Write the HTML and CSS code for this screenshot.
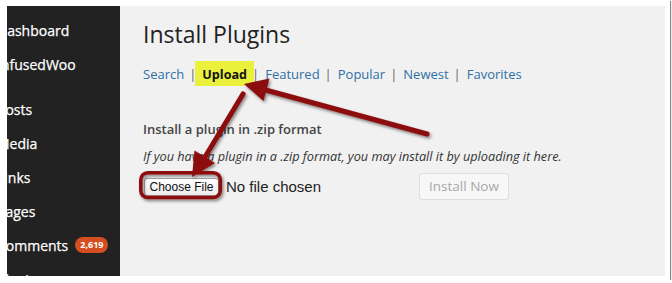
FILE: index.html
```html
<!DOCTYPE html>
<html>
<head>
<meta charset="utf-8">
<link rel="stylesheet" href="styles.css">
</head>
<body>
<div class="card">
  <div class="shot">
    <nav class="sidebar">
      <div class="item">Dashboard</div>
      <div class="item">InfusedWoo</div>
      <div class="item sep">Posts</div>
      <div class="item">Media</div>
      <div class="item">Links</div>
      <div class="item">Pages</div>
      <div class="item">Comments <span class="badge">2,619</span></div>
      <div class="item">Plugins</div>
    </nav>
    <main class="main">
      <h2 class="title">Install Plugins</h2>
      <div class="tabs">
        <a class="link">Search</a><span class="bar">|</span><span class="current">Upload</span><span class="bar">|</span><a class="link">Featured</a><span class="bar">|</span><a class="link">Popular</a><span class="bar">|</span><a class="link">Newest</a><span class="bar">|</span><a class="link">Favorites</a>
      </div>
      <h4 class="subhead">Install a plugin in .zip format</h4>
      <p class="desc">If you have a plugin in a .zip format, you may install it by uploading it here.</p>
      <div class="form-row">
        <span class="file-btn">Choose File</span>
        <span class="file-name">No file chosen</span>
        <span class="install-btn">Install Now</span>
      </div>
    </main>
  </div>
  <svg class="annot" width="672" height="283" viewBox="0 0 672 283">
    <defs>
      <filter id="sh" x="-20%" y="-20%" width="140%" height="140%">
        <feDropShadow dx="1.5" dy="2" stdDeviation="1.5" flood-color="#000" flood-opacity="0.45"/>
      </filter>
    </defs>
    <g filter="url(#sh)" fill="#8c0c0c" stroke="#8c0c0c">
      <line x1="427" y1="134" x2="262" y2="89" stroke-width="5" stroke-linecap="round"/>
      <polygon points="244,84 269.5,78.5 263.5,101" stroke="none"/>
      <line x1="243" y1="94" x2="205" y2="157" stroke-width="5" stroke-linecap="round"/>
      <polygon points="192,177 194.5,150.5 215,163" stroke="none"/>
      <rect x="140.8" y="172.8" width="79.5" height="24.7" rx="7" ry="7" fill="none" stroke-width="3.6"/>
    </g>
  </svg>
</div>
</body>
</html>
```

FILE: styles.css
```css
html, body {
  margin: 0;
  padding: 0;
  background: #fff;
}

.card {
  position: relative;
  width: 670px;
  height: 280px;
  box-sizing: border-box;
  padding: 6px 5px 4px 7px;
  background: #fff;
  box-shadow: 1px 1px 1px rgba(0,0,0,0.45), 0 0 1px rgba(0,0,0,0.25);
}

.shot {
  display: flex;
  height: 270px;
  overflow: hidden;
  background: #f1f1f1;
}

.sidebar {
  width: 113px;
  flex: none;
  background: #222;
  overflow: hidden;
  padding-top: 7px;
  box-sizing: border-box;
}

.item {
  height: 34px;
  display: flex;
  align-items: center;
  margin-left: -10px;
  white-space: nowrap;
  font-family: "Open Sans", sans-serif;
  font-size: 14px;
  color: #fff;
  -webkit-text-stroke: 0.25px #fff;
}

.item.sep {
  margin-top: 11px;
}

.badge {
  display: inline-block;
  margin-left: 7px;
  height: 16px;
  line-height: 16px;
  padding: 0 5px;
  border-radius: 8px;
  background: #d54e21;
  font-size: 9px;
  font-weight: 700;
  color: #fff;
  -webkit-text-stroke: 0;
}

.main {
  flex: 1;
  padding: 14px 0 0 23px;
  font-family: "Open Sans", sans-serif;
  color: #333;
}

.title {
  margin: 0;
  font-size: 23px;
  line-height: 29px;
  font-weight: 400;
  color: #222;
}

.tabs {
  margin-top: 15px;
  height: 20px;
  line-height: 20px;
  font-size: 13px;
  white-space: nowrap;
}

.link {
  color: #2e70a6;
}

.bar {
  color: #666;
  padding: 0 6px 0 5px;
}

.current {
  position: relative;
  z-index: 0;
  font-weight: 700;
  font-size: 12.6px;
  color: #111;
}

.current::before {
  content: "";
  position: absolute;
  z-index: -1;
  left: -7px;
  right: -7px;
  top: -5px;
  bottom: -3px;
  background: #eaf03b;
}

.subhead {
  margin: 35px 0 0;
  font-size: 13px;
  line-height: 20px;
  font-weight: 600;
  color: #444;
}

.desc {
  margin: 7px 0 0;
  font-size: 12.7px;
  line-height: 20px;
  font-style: italic;
  color: #333;
}

.form-row {
  display: flex;
  align-items: center;
  margin-top: 7px;
  padding-left: 1px;
}

.file-btn {
  box-sizing: border-box;
  width: 75px;
  height: 18px;
  border: 1px solid #a5a5a5;
  border-radius: 3px;
  background: linear-gradient(#fff, #ececec);
  font-family: "Liberation Sans", Arial, sans-serif;
  font-size: 12px;
  line-height: 16px;
  text-align: center;
  color: #111;
}

.file-name {
  margin-left: 7px;
  font-family: "Liberation Sans", Arial, sans-serif;
  font-size: 15px;
  color: #222;
}

.install-btn {
  margin-left: 98px;
  box-sizing: border-box;
  height: 27px;
  line-height: 25px;
  padding: 0 9px;
  border: 1px solid #ddd;
  border-radius: 3px;
  background: #f7f7f7;
  font-size: 13.5px;
  color: #a7a7a7;
}

.annot {
  position: absolute;
  left: 0;
  top: 0;
  pointer-events: none;
}
```
